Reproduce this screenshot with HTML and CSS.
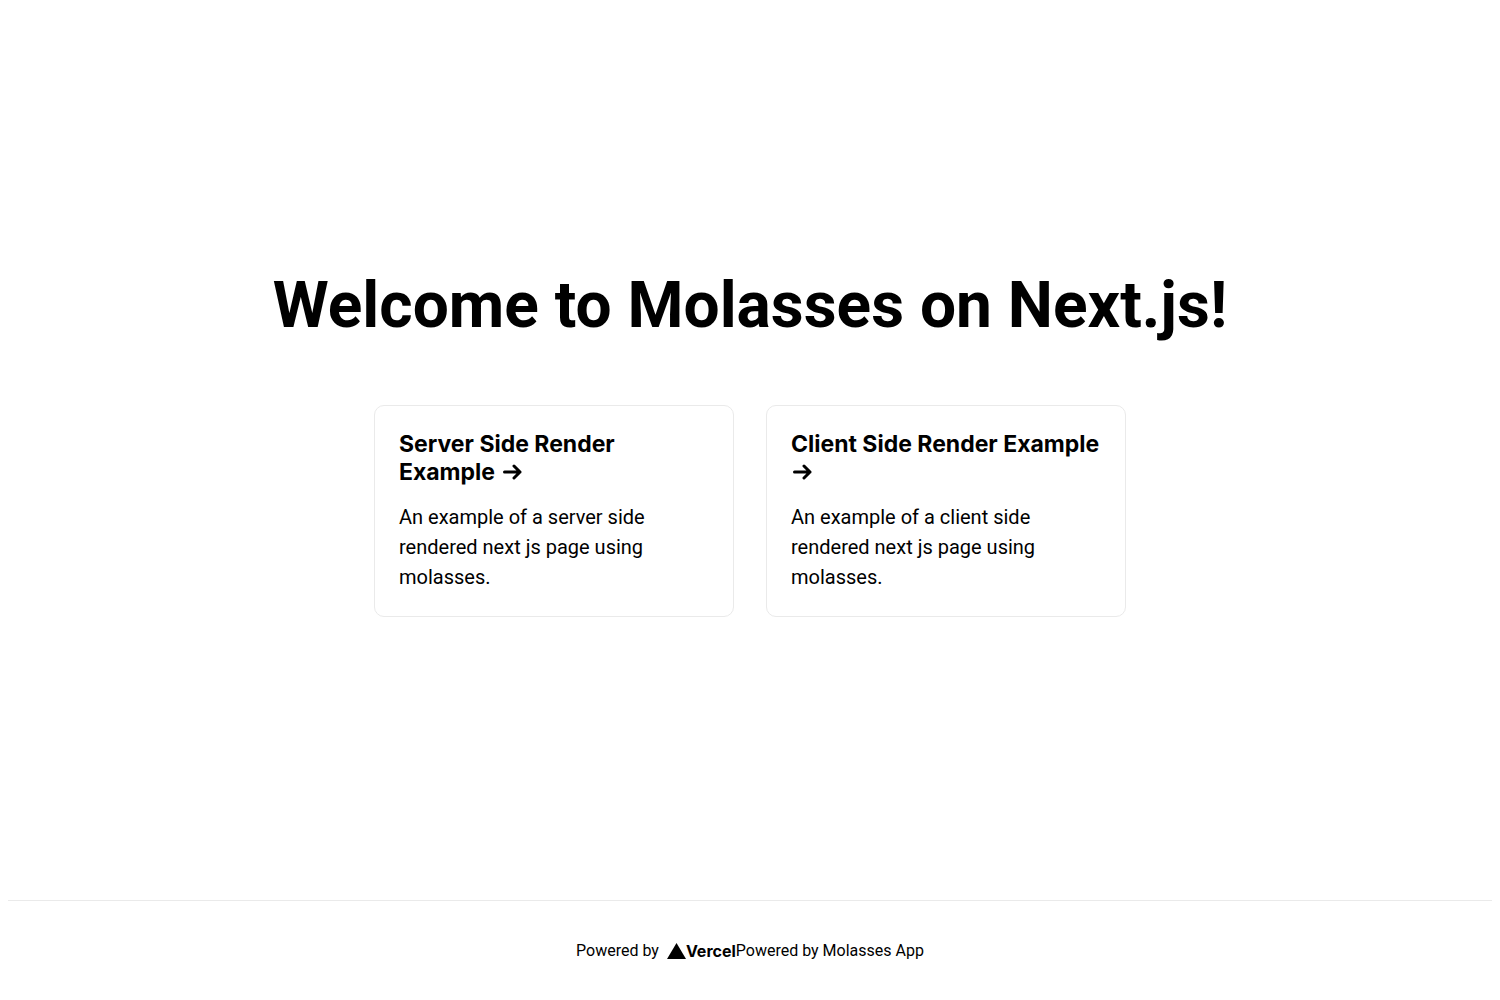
FILE: index.html
```html
<!DOCTYPE html>
<html lang="en">
<head>
  <meta charset="utf-8">
  <meta name="viewport" content="width=device-width, initial-scale=1">
  <title>Molasses on Next.js</title>
  <link rel="stylesheet" href="styles.css">
</head>
<body>
  <div class="container">
    <main class="main">
      <h1 class="title">Welcome to Molasses on Next.js!</h1>
      <div class="grid">
        <a class="card" href="#server-side">
          <h3 class="card-title">Server Side Render Example <svg class="arrow" viewBox="0 0 24 18" aria-hidden="true"><path d="M3.500 10H19M13 4L19 10L13 16"/></svg></h3>
          <p class="card-text">An example of a server side rendered next js page using molasses.</p>
        </a>
        <a class="card" href="#client-side">
          <h3 class="card-title">Client Side Render Example <svg class="arrow" viewBox="0 0 24 18" aria-hidden="true"><path d="M3.500 10H19M13 4L19 10L13 16"/></svg></h3>
          <p class="card-text">An example of a client side rendered next js page using molasses.</p>
        </a>
      </div>
    </main>
    <footer class="footer">
      <a class="powered" href="#vercel">Powered by
        <span class="logo"><svg class="logo-mark" viewBox="0 0 19 16" aria-hidden="true"><path d="M9.500 0L19 16H0Z"/></svg><span class="logo-name">Vercel</span></span></a>
      <a class="powered" href="#molasses">Powered by Molasses App</a>
    </footer>
  </div>
</body>
</html>
```
FILE: styles.css
```css
* {
  box-sizing: border-box;
}

body {
  margin: 0;
  color: #000;
  background: #fff;
  font-family: Roboto, sans-serif;
  font-size: 16px;
}

a {
  color: inherit;
  text-decoration: none;
}

.container {
  min-height: 100vh;
  padding: 0 8px;
  display: flex;
  flex-direction: column;
}

.main {
  flex: 1;
  padding: 80px 0;
  display: flex;
  flex-direction: column;
  justify-content: center;
  align-items: center;
}

.title {
  margin: 0;
  font-size: 64px;
  line-height: 78px;
  font-weight: 700;
  text-align: center;
}

.grid {
  width: 100%;
  max-width: 784px;
  margin-top: 44px;
  padding: 16px;
  display: grid;
  grid-template-columns: repeat(auto-fit, minmax(280px, 1fr));
  gap: 32px;
}

.card {
  padding: 24px;
  border: 1px solid #eaeaea;
  border-radius: 10px;
}

.card:hover,
.card:focus {
  color: #0070f3;
  border-color: #0070f3;
}

.card-title {
  margin: 0 0 16px;
  font-family: Inter, sans-serif;
  font-size: 23px;
  line-height: 28px;
}

.card-text {
  margin: 0;
  font-size: 20px;
  line-height: 30px;
}

.arrow {
  width: 24px;
  height: 18px;
  fill: none;
  stroke: currentColor;
  stroke-width: 3;
  stroke-linecap: round;
  stroke-linejoin: round;
}

.footer {
  min-height: 100px;
  border-top: 1px solid #eaeaea;
  display: flex;
  justify-content: center;
  align-items: center;
}

.powered {
  display: flex;
  align-items: center;
  gap: 8px;
}

.logo {
  display: flex;
  align-items: center;
}

.logo-mark {
  width: 19px;
  height: 16px;
}

.logo-name {
  font-family: Inter, sans-serif;
  font-size: 16px;
  line-height: 16px;
  font-weight: 700;
}
```
